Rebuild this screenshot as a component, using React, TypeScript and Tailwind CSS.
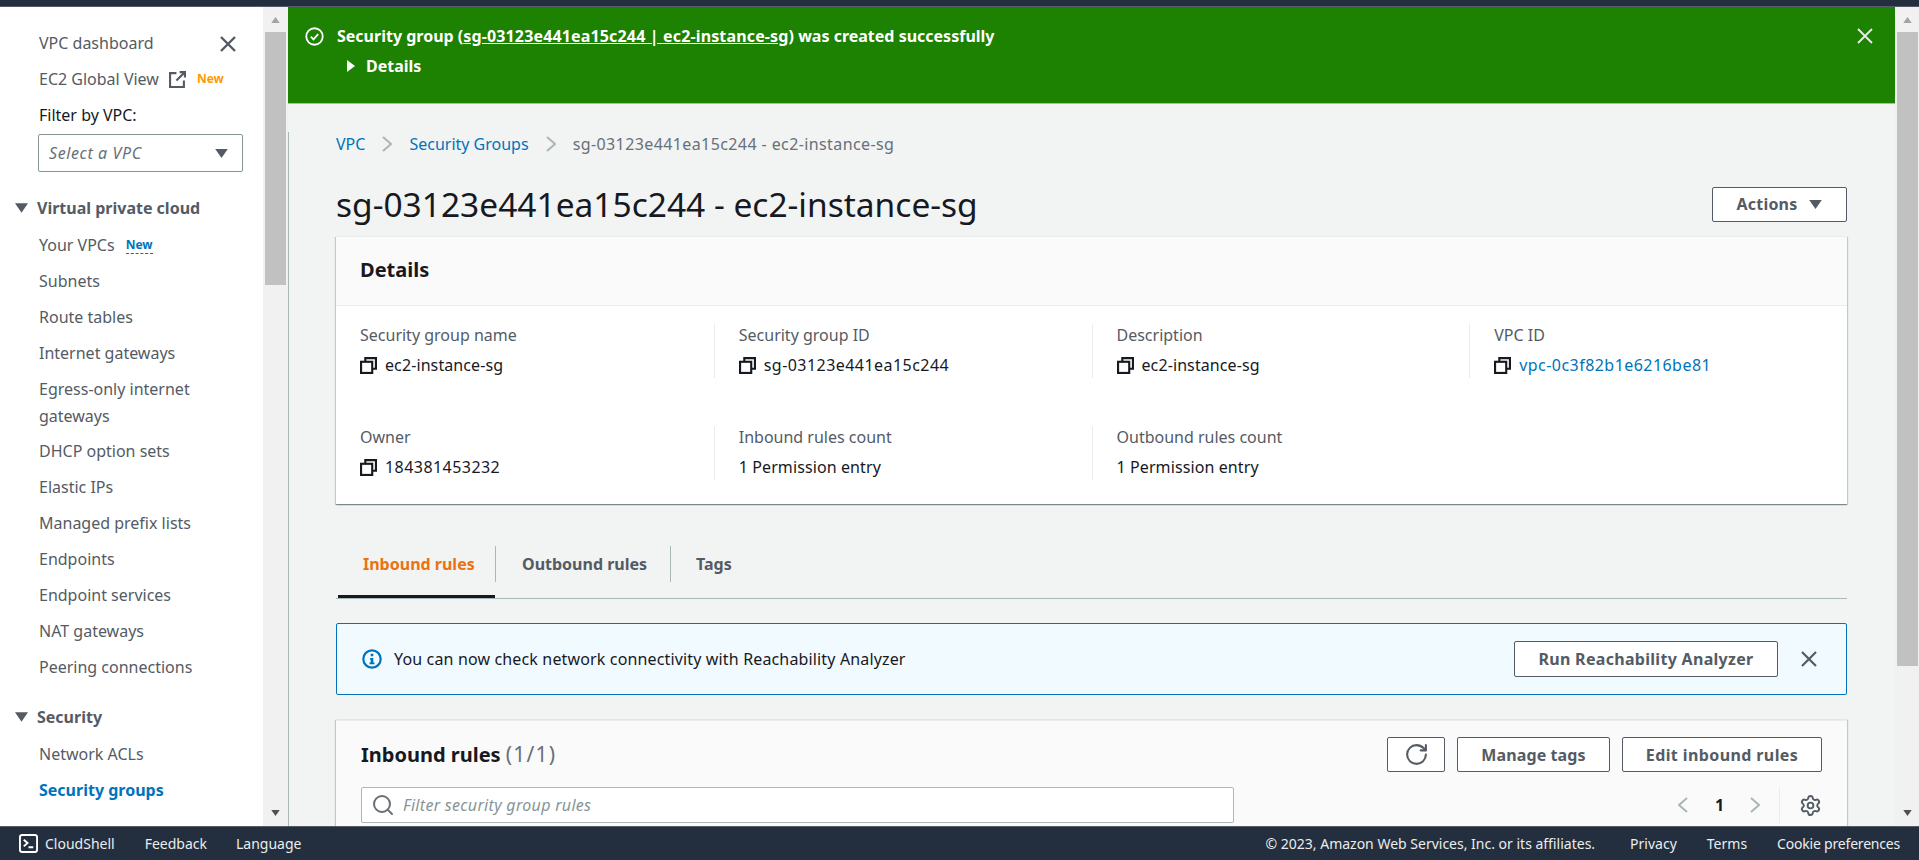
import React from "react";
import { Settings, RotateCw, Search } from "lucide-react";

const Tri = ({ className = "" }: { className?: string }) => (
  <svg viewBox="0 0 14 10" className={className} fill="currentColor"><path d="M0 0h14L7 10z" /></svg>
);

const Cross = ({ className = "", sw = 2 }: { className?: string; sw?: number }) => (
  <svg viewBox="0 0 16 16" className={className} fill="none" stroke="currentColor" strokeWidth={sw}><path d="M1 1l14 14M15 1 1 15" /></svg>
);

const Chev = ({ left }: { left?: boolean }) => (
  <svg viewBox="0 0 10 16" className="w-[10px] h-[16px] shrink-0 text-[#aab7b8]" fill="none" stroke="currentColor" strokeWidth="2">
    <path d={left ? "M9 1 1 8l8 7" : "M1 1l8 7-8 7"} />
  </svg>
);

const Copy = () => (
  <svg viewBox="0 0 16 16" className="w-[17px] h-[17px] shrink-0 text-[#16191f]" fill="none" stroke="currentColor" strokeWidth="2">
    <path d="M5 4V1h10v10h-3" /><rect x="1" y="4.5" width="10.5" height="10.5" />
  </svg>
);

const Item = ({ children, active }: { children: React.ReactNode; active?: boolean }) => (
  <div className={`h-9 flex items-center pl-[39px] whitespace-nowrap ${active ? "font-bold text-[#0073bb]" : "text-[#545b64]"}`}>{children}</div>
);

const Group = ({ children }: { children: React.ReactNode }) => (
  <div className="h-9 flex items-center pl-[15px] gap-[9px] font-bold text-[#545b64]">
    <Tri className="w-[13px] h-[10px]" />
    <span>{children}</span>
  </div>
);

const Scroll = ({ thumb, className = "" }: { thumb: string; className?: string }) => (
  <div className={`flex flex-col bg-[#f1f1f1] shrink-0 ${className}`}>
    <div className="h-[25px] flex items-center justify-center"><Tri className="w-[11px] h-[6px] rotate-180 text-[#a3a3a3]" /></div>
    <div className={`${thumb} bg-[#c1c1c1]`} />
    <div className="mt-auto h-[26px] flex items-center justify-center"><Tri className="w-[11px] h-[6px] text-[#505050]" /></div>
  </div>
);

const Field = ({ label, value, copy, link, first, wide }: { label: string; value: string; copy?: boolean; link?: boolean; first?: boolean; wide?: boolean }) => (
  <div className={`pl-6 ${first ? "" : "border-l border-[#eaeded]"} h-[54px]`}>
    <div className="text-[#545b64] h-[22px] flex items-center">{label}</div>
    <div className={`mt-2 h-[22px] flex items-center gap-[8px] ${wide ? "tracking-[0.45px]" : "tracking-[0.1px]"} ${link ? "text-[#0073bb]" : "text-[#16191f]"}`}>
      {copy && <Copy />}
      <span>{value}</span>
    </div>
  </div>
);

const Btn = ({ children, className = "" }: { children: React.ReactNode; className?: string }) => (
  <div className={`border border-[#545b64] rounded-[2px] bg-white text-[#545b64] font-bold flex items-center justify-center h-[35px] ${className}`}>{children}</div>
);

export default function App() {
  return (
    <div className="h-[860px] w-[1919px] overflow-hidden flex flex-col text-[16px] bg-white font-['Noto_Sans','Open_Sans',sans-serif]">
      <div className="h-[7px] shrink-0 bg-[#232f3e] border-b border-[#545b64]" />
      <div className="flex-1 min-h-0 flex">
        <nav className="w-[263px] shrink-0 pt-[18px] overflow-hidden relative">
          <Item>VPC dashboard</Item>
          <Cross className="absolute left-[220px] top-[29px] w-4 h-4 text-[#545b64]" sw={2.4} />
          <Item>
            EC2 Global View
            <svg viewBox="0 0 16 16" className="w-[17px] h-[17px] ml-[10px] text-[#545b64]" fill="none" stroke="currentColor" strokeWidth="2"><path d="M7 2H1v13h13V9M10 1h5v5M15 1 7 9" /></svg>
            <span className="ml-[11px] text-[12px] font-bold text-[#ff9900]">New</span>
          </Item>
          <div className="h-[35px] flex items-center pl-[39px] text-[#16191f]">Filter by VPC:</div>
          <div className="ml-[38px] w-[205px] h-[38px] mt-[2px] border border-[#879596] rounded-[2px] flex items-center justify-between pl-[10px] pr-[14px] italic text-[#687078]">
            <span className="tracking-[0.6px]">Select a VPC</span>
            <Tri className="w-[13px] h-[9px] text-[#545b64]" />
          </div>
          <div className="mt-[18px] mb-px"><Group>Virtual private cloud</Group></div>
          <Item>
            Your VPCs
            <span className="ml-[11px] text-[12px] font-bold text-[#0073bb] border-b border-dashed border-[#0073bb] leading-[16px]">New</span>
          </Item>
          <Item>Subnets</Item>
          <Item>Route tables</Item>
          <Item>Internet gateways</Item>
          <div className="pl-[39px] pt-[5px] pb-[4px] leading-[26.5px] text-[#545b64]">Egress-only internet<br />gateways</div>
          <Item>DHCP option sets</Item>
          <Item>Elastic IPs</Item>
          <Item>Managed prefix lists</Item>
          <Item>Endpoints</Item>
          <Item>Endpoint services</Item>
          <Item>NAT gateways</Item>
          <Item>Peering connections</Item>
          <div className="mt-[14px] mb-px"><Group>Security</Group></div>
          <Item>Network ACLs</Item>
          <Item active>Security groups</Item>
        </nav>
        <Scroll thumb="h-[253px] mx-[2px]" className="w-[25px]" />
        <main className="flex-1 min-w-0 overflow-hidden bg-[#f2f3f3]">
          <div className="h-[97px] bg-[#1d8102] border-b border-[#aab7b8] text-white font-bold flex justify-between pl-[17px] pr-[22px] pt-[19px]">
            <div>
              <div className="flex items-center h-[20px] gap-[13px]">
                <svg viewBox="0 0 18 18" className="w-[19px] h-[19px]" fill="none" stroke="currentColor" strokeWidth="1.7"><circle cx="9" cy="9" r="7.8" /><path d="M5.5 9.2 8 11.7l4.5-5" /></svg>
                <span>Security group (<span className="underline tracking-[0.15px]">sg-03123e441ea15c244 | ec2-instance-sg</span>) was created successfully</span>
              </div>
              <div className="flex items-center h-[20px] mt-[10px] pl-[41px] gap-[10px]">
                <svg viewBox="0 0 8 12" className="w-[10px] h-[12px]" fill="currentColor"><path d="M0 0l8 6-8 6z" /></svg>
                Details
              </div>
            </div>
            <Cross className="w-4 h-4 mt-[2px] text-[#eaeded]" sw={1.8} />
          </div>
          <div className="border-l border-[#aab7b8] pl-[47px] pr-[48px]">
            <div className="mt-[28px] h-[24px] flex items-center gap-[17px] text-[#0073bb]">
              <span>VPC</span>
              <Chev />
              <span>Security Groups</span>
              <Chev />
              <span className="text-[#687078] tracking-[0.4px]">sg-03123e441ea15c244 - ec2-instance-sg</span>
            </div>
            <div className="mt-[24px] h-[48px] flex items-center justify-between">
              <h1 className="text-[33.5px] text-[#16191f] leading-[48px]">sg-03123e441ea15c244 - ec2-instance-sg</h1>
              <Btn className="w-[135px] gap-[12px] tracking-[0.2px]">Actions <Tri className="w-[13px] h-[9px]" /></Btn>
            </div>
            <section className="mt-[8px] bg-white border-t border-[#eaeded] shadow-[0_1px_1px_0_rgba(0,28,36,0.3),1px_1px_1px_0_rgba(0,28,36,0.15),-1px_1px_1px_0_rgba(0,28,36,0.15)] h-[268px]">
              <div className="h-[69px] bg-[#fafafa] border-b border-[#eaeded] flex items-center pl-6 pb-[2px] text-[20px] font-bold text-[#16191f]">Details</div>
              <div className="grid grid-cols-4 gap-y-12 pt-[18px]">
                <Field first label="Security group name" value="ec2-instance-sg" copy />
                <Field label="Security group ID" value="sg-03123e441ea15c244" copy wide />
                <Field label="Description" value="ec2-instance-sg" copy />
                <Field label="VPC ID" value="vpc-0c3f82b1e6216be81" copy link wide />
                <Field first label="Owner" value="184381453232" copy wide />
                <Field label="Inbound rules count" value="1 Permission entry" />
                <Field label="Outbound rules count" value="1 Permission entry" />
              </div>
            </section>
            <div className="mt-[25px] h-[70px] border-b border-[#aab7b8] flex items-center font-bold text-[#545b64] pl-[2px]">
              <div className="h-full flex items-center w-[157px] pl-[25px] text-[#ec7211] border-b-[3px] border-[#16191f] pt-[3px]">Inbound rules</div>
              <div className="h-9 w-px bg-[#aab7b8]" />
              <div className="w-[174px] pl-[26px]">Outbound rules</div>
              <div className="h-9 w-px bg-[#aab7b8]" />
              <div className="pl-[25px]">Tags</div>
            </div>
            <div className="mt-[24px] h-[72px] border border-[#0073bb] rounded-[2px] bg-[#f1faff] flex items-center pl-[25px] pr-[29px] text-[#16191f]">
              <svg viewBox="0 0 20 20" className="w-5 h-5 text-[#0073bb] shrink-0"><circle cx="10" cy="10" r="8.7" fill="none" stroke="currentColor" strokeWidth="2.2" /><path fill="currentColor" d="M8.7 4.8h2.6v2.4H8.7zM8 9h3.3v4.6H12.5v1.6h-5v-1.6h1.2V10.6H8z" /></svg>
              <span className="ml-[12px] tracking-[0.15px]">You can now check network connectivity with Reachability Analyzer</span>
              <Btn className="ml-auto w-[264px] h-[36px] tracking-[0.3px]">Run Reachability Analyzer</Btn>
              <Cross className="ml-[23px] w-4 h-4 text-[#545b64]" sw={2.2} />
            </div>
            <section className="mt-[25px] bg-[#fafafa] border-t border-[#eaeded] shadow-[1px_0_1px_0_rgba(0,28,36,0.2),-1px_0_1px_0_rgba(0,28,36,0.2)] pl-[25px] pr-[25px] h-[120px]">
              <div className="pt-[16px] flex items-center justify-between">
                <div className="text-[20px] font-bold text-[#16191f]">Inbound rules <span className="font-normal text-[#687078] text-[21px] tracking-[1.2px]">(1/1)</span></div>
                <div className="flex gap-3">
                  <Btn className="w-[58px] h-[35px]"><RotateCw className="w-[25px] h-[25px]" strokeWidth={2} /></Btn>
                  <Btn className="w-[153px] h-[35px] tracking-[0.1px]">Manage tags</Btn>
                  <Btn className="w-[200px] h-[35px] tracking-[0.4px]">Edit inbound rules</Btn>
                </div>
              </div>
              <div className="mt-[15px] flex items-center">
                <div className="w-[873px] h-[36px] border border-[#aab7b8] rounded-[2px] bg-white flex items-center pl-[9px] gap-[8px] italic text-[#879596]">
                  <Search className="w-6 h-6 text-[#687078]" strokeWidth={2} />
                  <span className="tracking-[0.3px]">Filter security group rules</span>
                </div>
                <div className="ml-auto flex items-center text-[#16191f] font-bold">
                  <Chev left />
                  <span className="mx-[27px] w-[8px]">1</span>
                  <Chev />
                  <div className="ml-[19px] h-[36px] w-px bg-[#eaeded]" />
                  <Settings className="ml-[19px] w-[23px] h-[23px] text-[#545b64]" strokeWidth={2} />
                </div>
              </div>
            </section>
          </div>
        </main>
        <Scroll thumb="h-[634px] ml-[2px] mr-px" className="w-[24px]" />
      </div>
      <footer className="h-[34px] shrink-0 bg-[#232f3e] border-t border-[#545b64] flex items-center text-[14px] text-[#eaeded] pl-[19px] pr-[19px]">
        <svg viewBox="0 0 20 20" className="w-[19px] h-[19px]" fill="none" stroke="#fff" strokeWidth="2"><rect x="1" y="1" width="18" height="18" rx="2.5" /><path d="M5 6l4 3.5L5 13M10 14h5" /></svg>
        <span className="ml-[7px]">CloudShell</span>
        <span className="ml-[30px]">Feedback</span>
        <span className="ml-[29px]">Language</span>
        <span className="ml-auto">© 2023, Amazon Web Services, Inc. or its affiliates.</span>
        <span className="ml-[35px]">Privacy</span>
        <span className="ml-[30px]">Terms</span>
        <span className="ml-[30px] tracking-[-0.2px]">Cookie preferences</span>
      </footer>
    </div>
  );
}
